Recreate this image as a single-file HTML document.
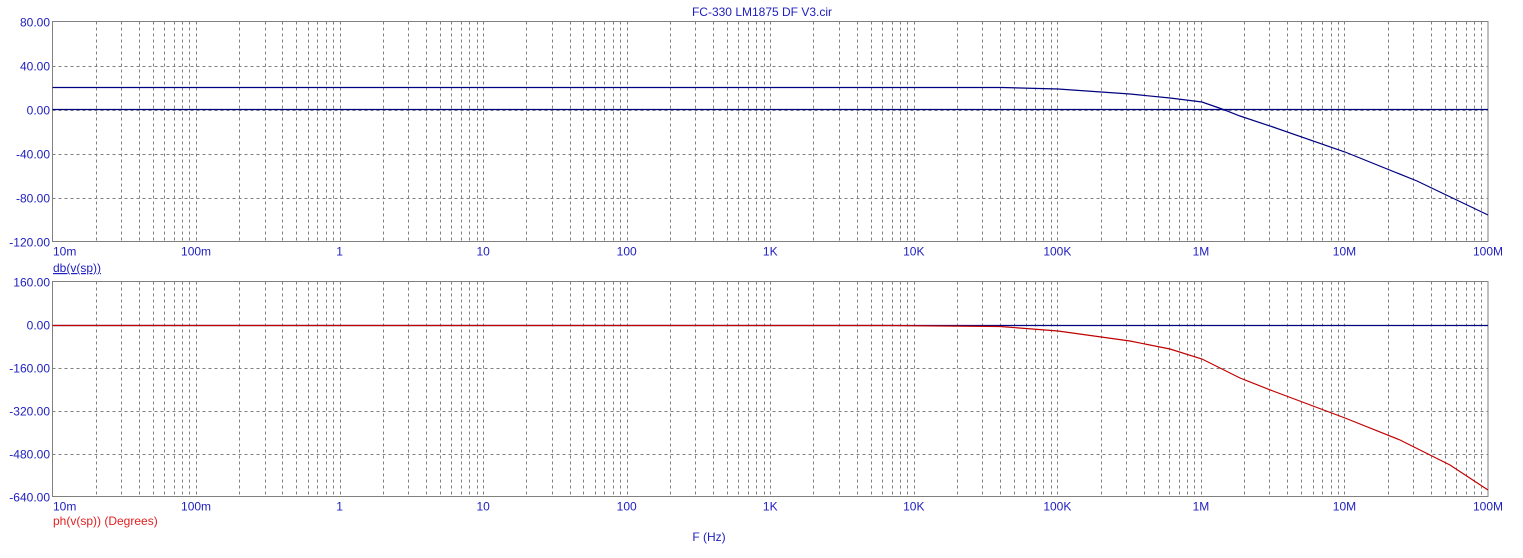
<!DOCTYPE html>
<html><head><meta charset="utf-8"><style>
html,body{margin:0;padding:0;background:#fff;}
svg{display:block;}
text{font-family:"Liberation Sans",Arial,sans-serif;font-size:12px;}
</style></head><body>
<svg id="s" width="1523" height="558" xmlns="http://www.w3.org/2000/svg">
<text x="762" y="16" fill="#2020c0" text-anchor="middle">FC-330 LM1875 DF V3.cir</text>
<g id="g"></g>
<text x="53" y="272" fill="#2020c0" text-decoration="underline">db(v(sp))</text>
<text x="53" y="525" fill="#e02020">ph(v(sp)) (Degrees)</text>
<text x="709" y="541" fill="#2020c0" text-anchor="middle">F (Hz)</text>
</svg>
<script>
var g=document.getElementById('g'),h='';
var L=52.5,R=1488,D=(R-L)/10;
function X(lf){return L+(lf+2)*D;}
function plot(top,bot,labels,zeroY){
  var n=labels.length-1,step=(bot-top)/n;
  for(var i=1;i<n;i++){var y=Math.round(top+i*step)+0.5;h+='<line x1="'+L+'" x2="'+R+'" y1="'+y+'" y2="'+y+'" stroke="#808080" stroke-dasharray="3,3"/>';}
  for(var d=0;d<10;d++)for(var k=2;k<=10;k++){var x=Math.round(L+(d+Math.log10(k))*D)+0.5;if(d==9&&k==10)continue;h+='<line x1="'+x+'" x2="'+x+'" y1="'+top+'" y2="'+bot+'" stroke="#808080" stroke-dasharray="3,3"/>';}
  h+='<rect x="'+L+'" y="'+top+'" width="'+(R-L)+'" height="'+(bot-top)+'" fill="none" stroke="#808080"/>';
  for(var i=0;i<=n;i++){h+='<text x="50" y="'+(top+i*step+5)+'" fill="#2020c0" text-anchor="end">'+labels[i]+'</text>';}
  h+='<line x1="'+L+'" x2="'+R+'" y1="'+zeroY+'" y2="'+zeroY+'" stroke="#000080" stroke-width="1.2"/>';
  var xl=['10m','100m','1','10','100','1K','10K','100K','1M','10M','100M'];
  for(var i=0;i<=10;i++){h+='<text x="'+(i==0?53:L+i*D)+'" y="'+(bot+14)+'" fill="#2020c0" text-anchor="'+(i==0?'start':'middle')+'">'+xl[i]+'</text>';}
}
plot(21.5,241.5,['80.00','40.00','0.00','-40.00','-80.00','-120.00'],109.5);
plot(281.5,496.5,['160.00','0.00','-160.00','-320.00','-480.00','-640.00'],325.5);
h+='<polyline fill="none" stroke="#000080" stroke-width="1.2" points="52.5,87.5 1002,87.5 1058,89 1130,94 1170,98 1202,102 1222,109 1240,116 1273,127 1345,152 1417,181 1488,215"/>';
h+='<polyline fill="none" stroke="#c00000" stroke-width="1.2" points="52.5,325.5 888,325.5 1000,326.5 1058,331 1130,341 1170,349 1202,359 1240,378 1273,391 1345,418 1400,440 1450,465 1488,490"/>';
g.innerHTML=h;
</script>
</body></html>
